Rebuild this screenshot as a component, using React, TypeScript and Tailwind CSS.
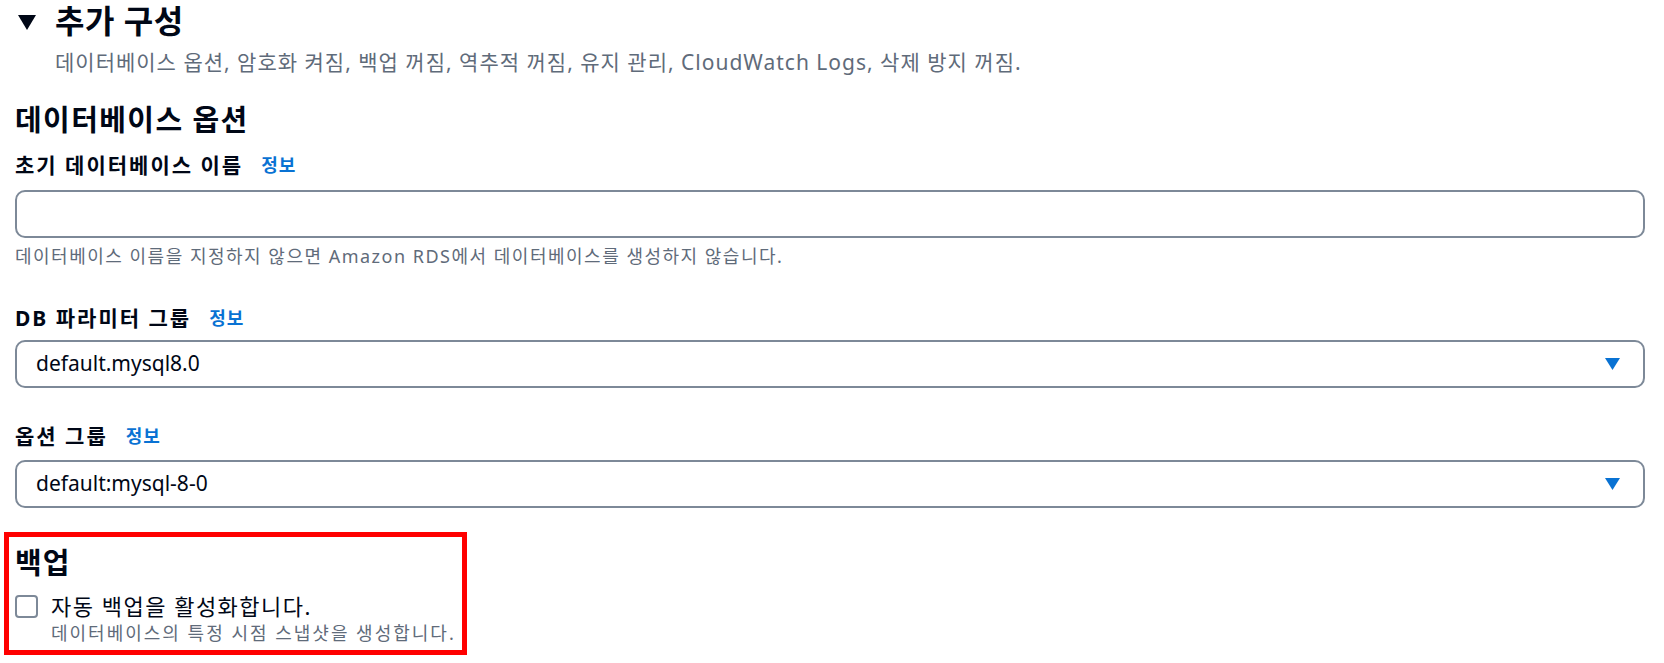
const font = { fontFamily: '"Noto Sans", "Noto Sans CJK KR", sans-serif' };

const Caret = () => (
  <svg width="15" height="12" viewBox="0 0 15 12" className="shrink-0">
    <path d="M0 0 H15 L7.5 12 Z" fill="#0972d3" />
  </svg>
);

const Label = ({ text }: { text: string }) => (
  <div className="flex items-center gap-x-[18px] text-[21px] leading-[26px] font-bold tracking-[2px] text-[#000716]">
    <span>{text}</span>
    <span className="text-[#0972d3] text-[18px] tracking-[1px]">정보</span>
  </div>
);

const Select = ({ value }: { value: string }) => (
  <div className="flex items-center justify-between h-[48px] w-full border-2 border-[#7d8998] rounded-[10px] pl-[19px] pr-[23px]">
    <span className="text-[21px] text-[#000716]">{value}</span>
    <Caret />
  </div>
);

export default function App() {
  return (
    <div className="w-[1664px] h-[663px] bg-white pl-[15px] pr-[19px] pt-[1px] overflow-hidden" style={font}>
      <div className="flex items-center">
        <svg width="18" height="15" viewBox="0 0 18 15" className="ml-[3px] mt-[2px]">
          <path d="M0 0 H18 L9 15 Z" fill="#000716" />
        </svg>
        <h1 className="ml-[19px] text-[32px] leading-[40px] font-bold tracking-[0.5px] text-[#000716]">추가 구성</h1>
      </div>
      <p className="ml-[40px] mt-[8px] text-[21px] leading-[26px] tracking-[1px] text-[#5f6b7a]">
        데이터베이스 옵션, 암호화 켜짐, 백업 꺼짐, 역추적 꺼짐, 유지 관리, CloudWatch Logs, 삭제 방지 꺼짐.
      </p>

      <h2 className="mt-[28px] text-[29px] leading-[34px] font-bold tracking-[1.4px] text-[#000716]">데이터베이스 옵션</h2>

      <div className="mt-[15px]">
        <Label text="초기 데이터베이스 이름" />
      </div>
      <div className="mt-[12px] h-[48px] w-full border-2 border-[#7d8998] rounded-[10px]" />
      <p className="mt-[6px] text-[18px] leading-[24px] tracking-[1.5px] text-[#5f6b7a]">
        데이터베이스 이름을 지정하지 않으면 Amazon RDS에서 데이터베이스를 생성하지 않습니다.
      </p>

      <div className="mt-[37px]">
        <Label text="DB 파라미터 그룹" />
      </div>
      <div className="mt-[9px]">
        <Select value="default.mysql8.0" />
      </div>

      <div className="mt-[35px]">
        <Label text="옵션 그룹" />
      </div>
      <div className="mt-[11px]">
        <Select value="default:mysql-8-0" />
      </div>

      <div className="mt-[24px] -ml-[11px] w-[463px] h-[123px] border-[5px] border-[#ff0000] pl-[6px] pt-[9px]">
        <h2 className="text-[29px] leading-[34px] font-bold tracking-[1px] text-[#000716]">백업</h2>
        <div className="mt-[13px] flex items-start gap-x-[13px]">
          <div className="mt-[2px] w-[23px] h-[23px] border-2 border-[#7d8998] rounded-[4px] shrink-0" />
          <div>
            <p className="text-[22px] leading-[26px] tracking-[1.5px] text-[#000716]">자동 백업을 활성화합니다.</p>
            <p className="mt-[3px] text-[18px] leading-[22px] tracking-[2px] text-[#5f6b7a]">데이터베이스의 특정 시점 스냅샷을 생성합니다.</p>
          </div>
        </div>
      </div>
    </div>
  );
}
